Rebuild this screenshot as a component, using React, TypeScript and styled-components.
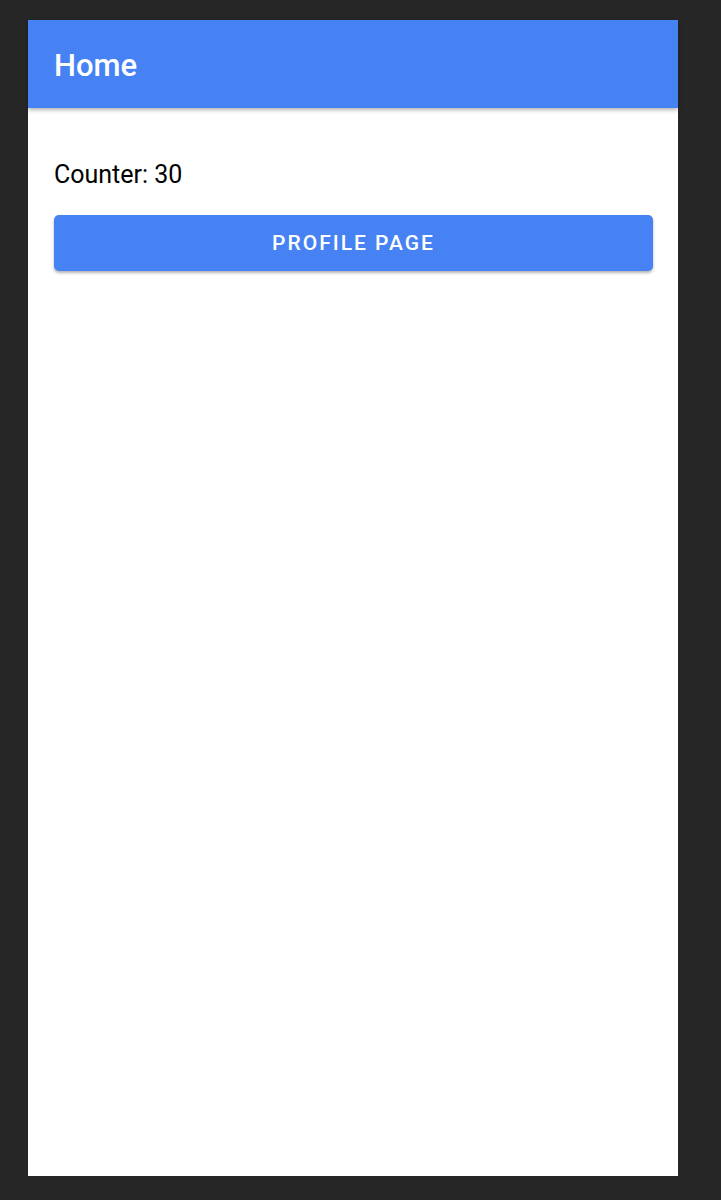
import React, { useState } from "react";
import styled, { createGlobalStyle } from "styled-components";

const GlobalStyle = createGlobalStyle`
  html, body {
    margin: 0;
    padding: 0;
    background: #262626;
    font-family: Roboto, "Noto Sans", sans-serif;
  }
`;

const Stage = styled.div`
  min-height: 1200px;
  padding: 20px 43px 24px 28px;
  box-sizing: border-box;
  display: flex;
`;

const Screen = styled.div`
  width: 650px;
  height: 1156px;
  background: #ffffff;
  display: flex;
  flex-direction: column;
`;

const AppBar = styled.header`
  height: 88px;
  flex-shrink: 0;
  background: #4682f4;
  display: flex;
  align-items: center;
  padding: 0 26px;
  box-shadow: 0 2px 4px rgba(0, 0, 0, 0.3);
  position: relative;
  z-index: 1;
`;

const Title = styled.h1`
  margin: 2px 0 0;
  color: #ffffff;
  font-size: 31px;
  font-weight: 500;
`;

const Body = styled.main`
  padding: 51px 25px 0 26px;
  display: flex;
  flex-direction: column;
`;

const CounterText = styled.div`
  font-size: 25px;
  color: #000;
  line-height: 32px;
`;

const Button = styled.button`
  margin-top: 24px;
  height: 56px;
  border: none;
  border-radius: 5px;
  background: #4682f4;
  color: #ffffff;
  font-family: Roboto, "Noto Sans", sans-serif;
  font-size: 21px;
  font-weight: 500;
  letter-spacing: 2px;
  text-transform: uppercase;
  box-shadow: 0 2px 3px rgba(0, 0, 0, 0.3);
  cursor: pointer;
`;

export default function App() {
  const [count, setCount] = useState(30);
  return (
    <>
      <GlobalStyle />
      <Stage>
        <Screen>
          <AppBar>
            <Title>Home</Title>
          </AppBar>
          <Body>
            <CounterText>Counter: {count}</CounterText>
            <Button onClick={() => setCount((c) => c + 1)}>Profile page</Button>
          </Body>
        </Screen>
      </Stage>
    </>
  );
}
